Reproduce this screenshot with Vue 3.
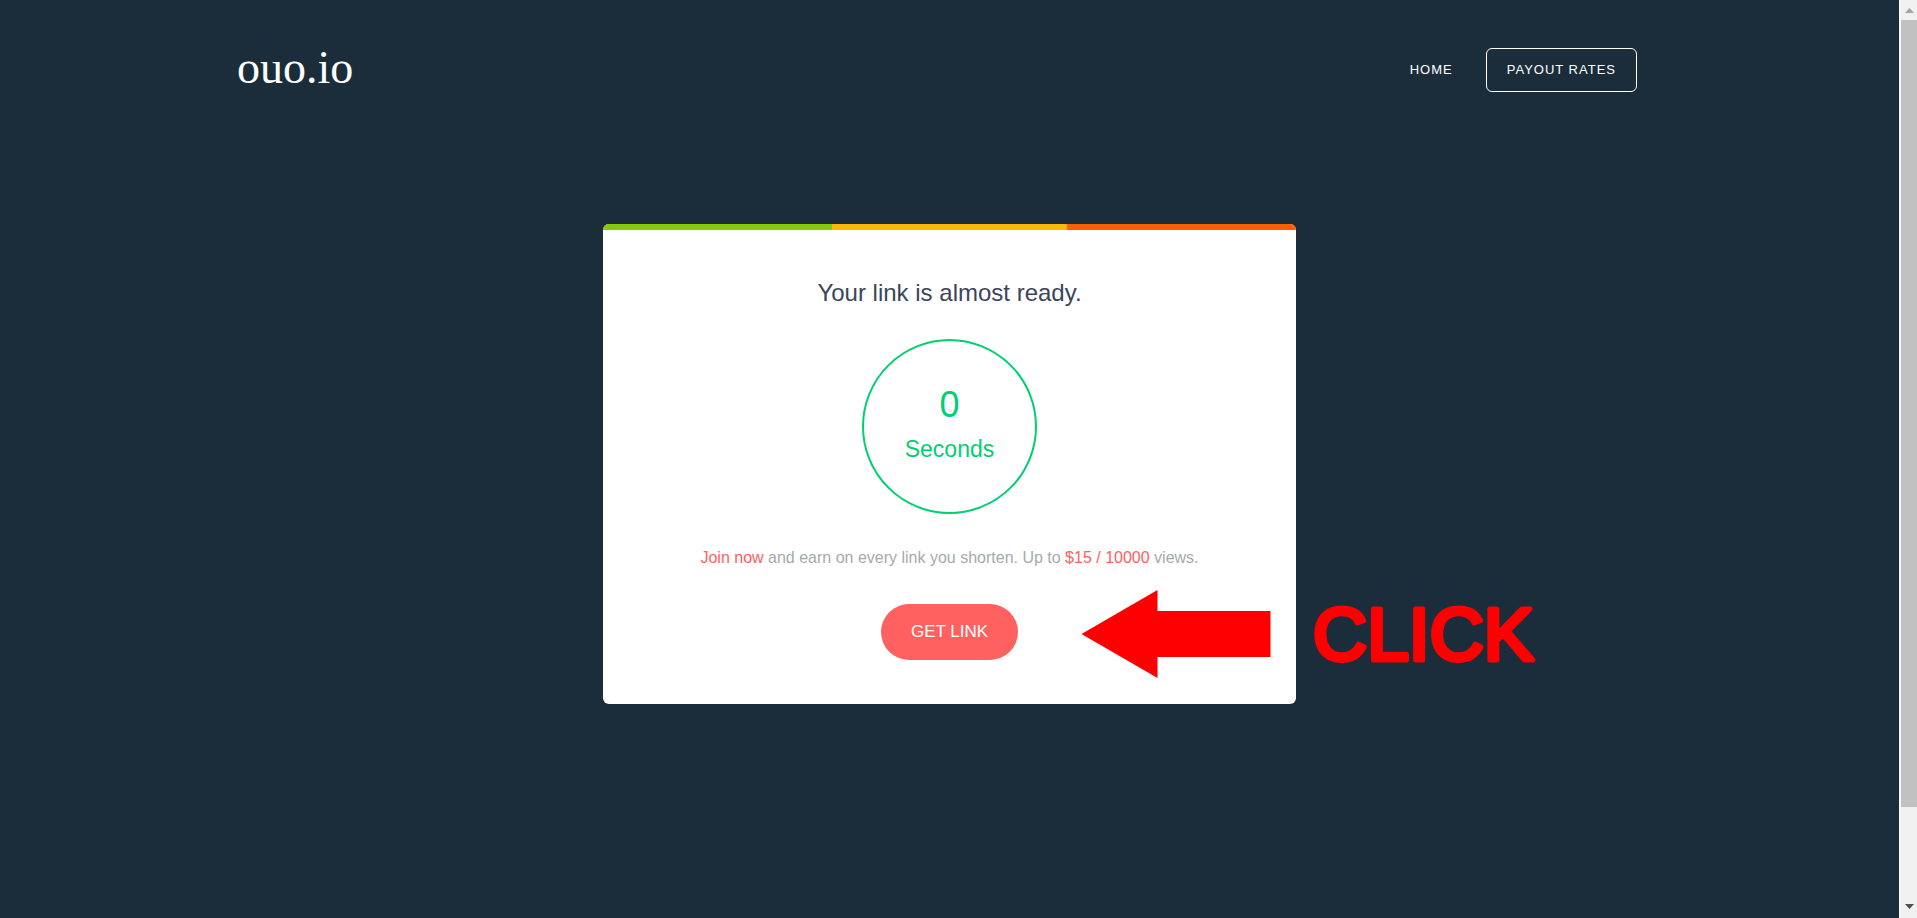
<script setup>
import { ref } from 'vue'

const seconds = ref(0)
const segments = ['green', 'amber', 'orange']
</script>

<template>
  <div class="page">
    <div class="content">
      <header class="header">
        <a class="logo" href="#">ouo.io</a>
        <nav class="nav">
          <a class="nav-link" href="#">HOME</a>
          <a class="nav-link outlined" href="#">PAYOUT RATES</a>
        </nav>
      </header>

      <main class="card">
        <div class="stripe">
          <span v-for="name in segments" :key="name" :class="name"></span>
        </div>
        <h1 class="title">Your link is almost ready.</h1>
        <div class="timer">
          <span class="count">{{ seconds }}</span>
          <span class="unit">Seconds</span>
        </div>
        <p class="promo">
          <a href="#">Join now</a> and earn on every link you shorten. Up to
          <a href="#">$15 / 10000</a> views.
        </p>
        <button class="get-link" type="button">GET LINK</button>

        <svg class="callout" width="470" height="88" viewBox="0 0 470 88">
          <path d="M0.5 44 L76.5 0 V21 H189.5 V67 H76.5 V88 Z" />
          <text x="232" y="70">CLICK</text>
        </svg>
      </main>
    </div>

    <div class="scrollbar" aria-hidden="true">
      <svg class="arrow up" viewBox="0 0 16 20"><path d="M4 13 L8.5 8 L13 13 Z" /></svg>
      <div class="thumb"></div>
      <div class="rest"></div>
      <svg class="arrow down" viewBox="0 0 16 20"><path d="M4 6 H13 L8.5 11 Z" /></svg>
    </div>
  </div>
</template>

<style>
body {
  margin: 0;
  background: #1b2d3b;
}
</style>

<style scoped>
.page {
  display: flex;
  min-height: 100vh;
  background: #1b2d3b;
  font-family: "Liberation Sans", Arial, sans-serif;
}
.content {
  flex: 1;
  min-width: 0;
}
a {
  text-decoration: none;
}
.header {
  display: flex;
  justify-content: space-between;
  align-items: flex-start;
  padding: 48px 262px 0 237px;
}
.logo {
  color: #fff;
  font-family: "Liberation Serif", "Times New Roman", serif;
  font-size: 46px;
  line-height: 40px;
}
.nav {
  display: flex;
  align-items: center;
  gap: 33px;
}
.nav-link {
  color: #fff;
  font-size: 13px;
  line-height: 42px;
  letter-spacing: 1px;
}
.outlined {
  padding: 0 20px;
  border: 1px solid #fff;
  border-radius: 6px;
}
.card {
  position: relative;
  display: flex;
  flex-direction: column;
  align-items: center;
  box-sizing: border-box;
  max-width: 693px;
  margin: 132px auto 0;
  padding-bottom: 44px;
  border-radius: 6px;
  background: #fff;
}
.stripe {
  display: grid;
  grid-template-columns: 33fr 34fr 33fr;
  align-self: stretch;
  height: 6px;
  border-radius: 6px 6px 0 0;
  overflow: hidden;
}
.green {
  background: #86c80c;
}
.amber {
  background: #ffb900;
}
.orange {
  background: #ff5f00;
}
.title {
  margin: 47px 0 0;
  color: #3b4559;
  font-size: 24px;
  font-weight: 400;
  line-height: 32px;
}
.timer {
  display: flex;
  flex-direction: column;
  align-items: center;
  gap: 10px;
  box-sizing: border-box;
  width: 175px;
  height: 175px;
  margin-top: 30px;
  padding-top: 44px;
  border: 2px solid #00cf72;
  border-radius: 50%;
  color: #00cf72;
}
.count {
  font-size: 36px;
  line-height: 40px;
}
.unit {
  font-size: 23px;
  line-height: 28px;
}
.promo {
  margin: 32px 0 0;
  color: #a5abab;
  font-size: 16px;
  line-height: 24px;
}
.promo a {
  color: #ff6060;
}
.get-link {
  margin-top: 34px;
  padding: 0 30px;
  border: 0;
  border-radius: 28px;
  background: #ff6060;
  color: #fff;
  font-family: inherit;
  font-size: 17px;
  line-height: 56px;
  cursor: pointer;
}
.callout {
  position: absolute;
  top: 366px;
  left: 478px;
  fill: #f00;
  pointer-events: none;
}
.callout text {
  font-size: 75px;
  stroke: #f00;
  stroke-width: 5px;
  stroke-linecap: round;
  stroke-linejoin: round;
}
.scrollbar {
  display: flex;
  flex-direction: column;
  width: 16px;
  border-left: 2px solid #f8f8f8;
  background: #f0f0f0;
}
.arrow {
  width: 16px;
  height: 20px;
}
.up {
  fill: #a3a3a3;
}
.down {
  fill: #505050;
}
.thumb {
  flex: 787;
  background: #c1c1c1;
}
.rest {
  flex: 91;
}
</style>
